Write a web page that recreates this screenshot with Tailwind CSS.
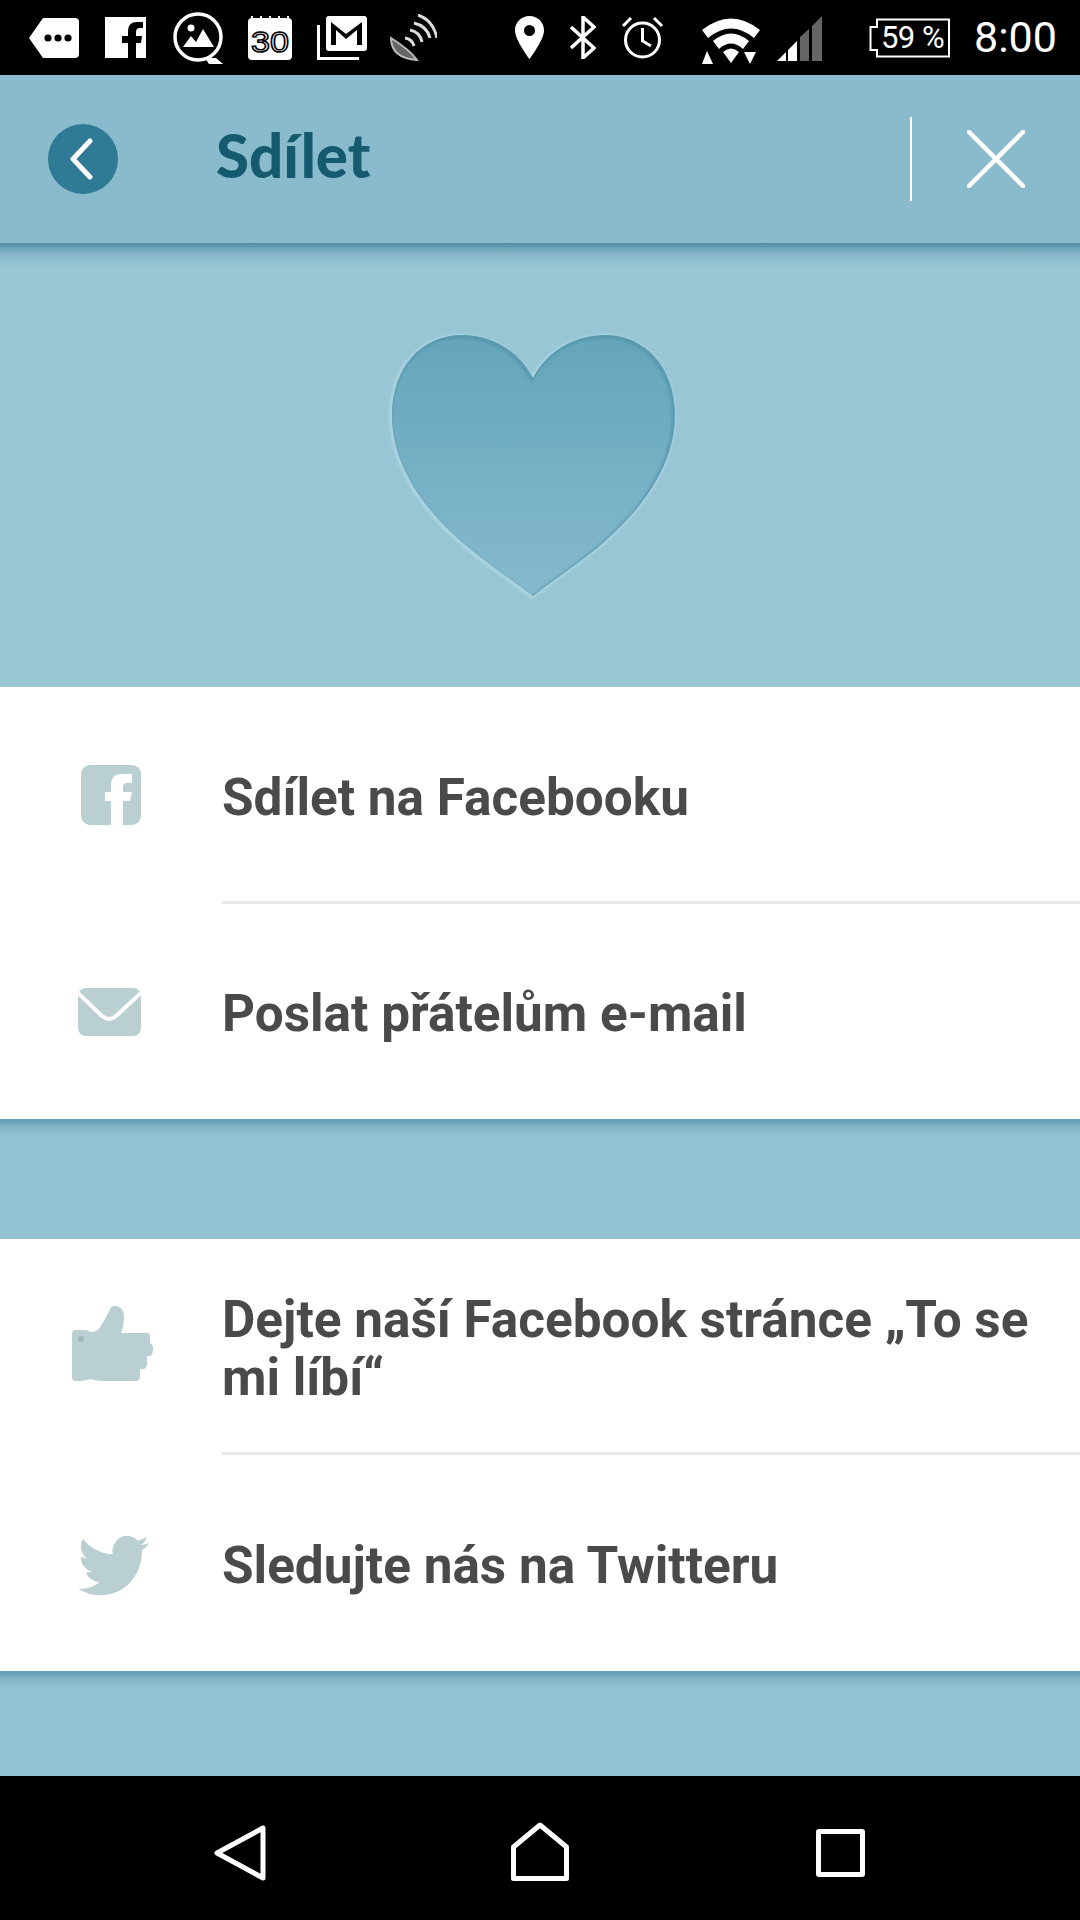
<!DOCTYPE html>
<html lang="cs">
<head>
    <meta charset="UTF-8">
    <meta name="viewport" content="width=device-width, initial-scale=1.0">
    <title>Sdílet</title>
    <script src="https://cdn.jsdelivr.net/npm/@tailwindcss/browser@4"></script>
</head>
<body class="bg-white font-['Roboto',sans-serif]">
<div class="w-[1080px] h-[1920px] flex flex-col overflow-hidden">

    <!-- status bar -->
    <div class="h-[75px] shrink-0 bg-black flex items-center text-white">
        <svg class="ml-[29px] w-[50px] h-[40px]" viewBox="0 0 50 40"><path d="M14 0H46Q50 0 50 4V36Q50 40 46 40H14L0 20Z" fill="#fff"/><circle cx="19" cy="20" r="3.6" fill="#000"/><circle cx="29" cy="20" r="3.6" fill="#000"/><circle cx="39" cy="20" r="3.6" fill="#000"/></svg>
        <svg class="ml-[26px] w-[41px] h-[41px]" viewBox="0 0 41 41"><path d="M0 0H41V41H31V26H36L37 19H31V15Q31 11 35 11H38V5H32Q23 5 23 14V19H17V26H23V41H0Z" fill="#fff"/></svg>
        <svg class="ml-[27px] w-[50px] h-[52px]" viewBox="0 0 50 52"><circle cx="25" cy="25" r="23" fill="none" stroke="#fff" stroke-width="3.5"/><path d="M32 46H43L50 52H36Z" fill="#fff"/><circle cx="18" cy="16" r="3.5" fill="#fff"/><path d="M10 35L18 24L23 30L30 17L41 35Z" fill="#fff"/></svg>
        <svg class="ml-[25px] w-[44px] h-[44px]" viewBox="0 0 44 44"><path d="M4 2H40Q44 2 44 6V40Q44 44 40 44H4Q0 44 0 40V6Q0 2 4 2Z" fill="#fff"/><path d="M4 2V0M13 2V0M22 2V0M31 2V0M40 2V0" stroke="#fff" stroke-width="2"/><text x="22" y="36" text-anchor="middle" fill="#fff" stroke="#000" stroke-width="1.500" font-family="Liberation Sans, sans-serif" font-size="30" textLength="38" lengthAdjust="spacingAndGlyphs">30</text></svg>
        <svg class="ml-[25px] w-[50px] h-[44px]" viewBox="0 0 50 44"><path d="M1.500 9V42.500H42" fill="none" stroke="#fff" stroke-width="3"/><rect x="9" y="0" width="41" height="35" rx="3" fill="#fff"/><path d="M14 29V6L29 18L45 6V29H40V14L29 23L19 14V29Z" fill="#000"/></svg>
        <svg class="ml-[23px] w-[47px] h-[47px]" viewBox="0 0 47 47"><path d="M1 24Q1 44 27 46Q20 36 1 24Z" fill="#666" stroke="#bbb" stroke-width="2"/><path d="M15 24Q22 25 24 32M20 16Q30 18 32 28M24 9Q37 12 40 24M28 1Q43 6 47 24" fill="none" stroke="#ddd" stroke-width="3"/></svg>
        <svg class="ml-[78px] w-[29px] h-[43px]" viewBox="0 0 29 43"><path fill-rule="evenodd" d="M14.500 0C6 0 0 6.500 0 14.500C0 24 14.500 43 14.500 43S29 24 29 14.500C29 6.500 23 0 14.500 0ZM14.500 9A5.500 5.500 0 1 1 14.500 20A5.500 5.500 0 1 1 14.500 9Z" fill="#fff"/></svg>
        <svg class="ml-[26px] w-[26px] h-[43px]" viewBox="0 0 26 43"><path d="M1 11L24 32L13 42V1L24 11L1 32" fill="none" stroke="#fff" stroke-width="3.500"/></svg>
        <svg class="ml-[25px] w-[43px] h-[43px]" viewBox="0 0 43 43"><circle cx="21.500" cy="24" r="17" fill="none" stroke="#fff" stroke-width="3"/><path d="M21.500 12V25L30 30M2 10L10 2M41 10L33 2" fill="none" stroke="#fff" stroke-width="3"/></svg>
        <svg class="ml-[38px] w-[58px] h-[48px] mt-[4px]" viewBox="0 0 58 48"><path d="M0 14Q29 -9 58 14L52 22Q29 3 6 22Z" fill="#fff"/><path d="M11 25Q29 10 47 25L41 33Q29 22 17 33Z" fill="#fff"/><path d="M21 36Q29 29 37 36L29 47Z" fill="#fff"/><path d="M5 35L11 48H0ZM42 36H54L48 48Z" fill="#fff"/></svg>
        <svg class="ml-[17px] w-[46px] h-[46px]" viewBox="0 0 46 46"><path d="M0 46L9 37V46ZM11 35L20 26V46H11Z" fill="#fff"/><path d="M23 22L32 14V46H23ZM35 11L45 1V46H35Z" fill="#666"/></svg>
        <div class="ml-[46px] w-[81px] h-[40px] relative flex items-center justify-center">
            <svg class="absolute inset-0" width="81" height="40" viewBox="0 0 81 40"><path d="M8 1.500H80V38.500H8V32H1.500V9H8Z" fill="none" stroke="#fff" stroke-width="2"/></svg>
            <span class="relative ml-[6px] text-[31px] leading-none tracking-[-0.5px] whitespace-nowrap">59 %</span>
        </div>
        <span class="ml-[24px] text-[43px] leading-none">8:00</span>
    </div>

    <!-- header -->
    <div class="h-[168px] shrink-0 bg-[#8abbcd] flex items-center pl-[48px]">
        <div class="w-[70px] h-[70px] rounded-full bg-[#2f7a94] flex items-center justify-center">
            <svg class="w-[24px] h-[42px] mr-[4px]" viewBox="0 0 24 42"><path d="M21 3L4 21L21 39" fill="none" stroke="#fff" stroke-width="5" stroke-linecap="round" stroke-linejoin="round"/></svg>
        </div>
        <h1 class="ml-[98px] -mt-[8px] text-[60px] leading-none font-black font-['Lato',sans-serif] text-[#155a6e]">Sdílet</h1>
        <div class="ml-auto w-[2px] h-[84px] bg-white"></div>
        <svg class="ml-[55px] mr-[55px] w-[58px] h-[58px]" viewBox="0 0 58 58"><path d="M2 2L56 56M56 2L2 56" fill="none" stroke="#fff" stroke-width="4.500" stroke-linecap="round"/></svg>
    </div>

    <!-- hero -->
    <div class="h-[444px] shrink-0 bg-[#98c6d5] bg-[linear-gradient(180deg,#528ea6_0,#83b3c5_10px,#98c6d5_24px)] pt-[92px] pl-[392px]">
        <svg class="w-[283px] h-[261px] overflow-visible" viewBox="0 0 283 261">
            <defs>
                <linearGradient id="heartFill" x1="0" y1="0" x2="0" y2="1"><stop offset="0" stop-color="#64a5bb"/><stop offset="1" stop-color="#86bacd"/></linearGradient>
                <clipPath id="heartClip"><path d="M141 43C127 16 100 0 70 0C30 0 0 32 0 80C0 120 20 160 60 198C85 222 115 241 141 261C167 241 197 222 222 198C262 160 283 120 283 80C283 32 253 0 213 0C183 0 155 16 141 43Z"/></clipPath>
                <filter id="soft" x="-10%" y="-10%" width="120%" height="120%"><feGaussianBlur stdDeviation="1.500"/></filter>
            </defs>
            <path d="M141 43C127 16 100 0 70 0C30 0 0 32 0 80C0 120 20 160 60 198C85 222 115 241 141 261C167 241 197 222 222 198C262 160 283 120 283 80C283 32 253 0 213 0C183 0 155 16 141 43Z" fill="none" stroke="#bfe1ea" stroke-width="2" transform="translate(-1 1)" filter="url(#soft)"/>
            <path d="M141 43C127 16 100 0 70 0C30 0 0 32 0 80C0 120 20 160 60 198C85 222 115 241 141 261C167 241 197 222 222 198C262 160 283 120 283 80C283 32 253 0 213 0C183 0 155 16 141 43Z" fill="url(#heartFill)"/>
            <g clip-path="url(#heartClip)"><path d="M141 43C127 16 100 0 70 0C30 0 0 32 0 80C0 120 20 160 60 198C85 222 115 241 141 261C167 241 197 222 222 198C262 160 283 120 283 80C283 32 253 0 213 0C183 0 155 16 141 43Z" fill="none" stroke="#4b8ba3" stroke-opacity="0.7" stroke-width="3" filter="url(#soft)" transform="translate(-1.500 1.500)"/></g>
        </svg>
    </div>

    <!-- first list -->
    <div class="bg-white shrink-0">
        <div class="h-[214px] flex items-center">
            <div class="w-[222px] shrink-0 pl-[81px] pt-[1px]">
                <svg class="w-[60px] h-[60px]" viewBox="0 0 60 60"><rect width="60" height="60" rx="9" fill="#b9cfd1"/><path d="M30 60V36H24V27H30V20Q30 9 41 9H51V18H46Q42 18 42 22V27H51L49 36H42V60Z" fill="#fff"/></svg>
            </div>
            <span class="text-[51.3px] font-bold text-[#4a4a4a] leading-[58px] pt-[8px]">Sdílet na Facebooku</span>
        </div>
        <div class="ml-[222px] h-[3px] bg-[#e8e8e8]"></div>
        <div class="h-[215px] flex items-center">
            <div class="w-[222px] shrink-0 pl-[78px]">
                <svg class="w-[63px] h-[48px]" viewBox="0 0 63 48"><defs><clipPath id="mailClip"><rect width="63" height="48" rx="8"/></clipPath></defs><rect width="63" height="48" rx="8" fill="#b9cfd1"/><path d="M-2 3L24 28Q31 34 38 28L65 3" fill="none" stroke="#fff" stroke-width="4" clip-path="url(#mailClip)"/></svg>
            </div>
            <span class="text-[51.3px] font-bold text-[#4a4a4a] leading-[58px] pt-[4px]">Poslat přátelům e-mail</span>
        </div>
    </div>

    <!-- gap -->
    <div class="h-[120px] shrink-0 bg-[#93c3d3] bg-[linear-gradient(180deg,#5c9ab0_0,#83b4c6_8px,#93c3d3_18px)]"></div>

    <!-- second list -->
    <div class="bg-white shrink-0">
        <div class="h-[213px] flex items-center">
            <div class="w-[222px] shrink-0 pl-[72px]">
                <svg class="w-[81px] h-[75px] -mt-[5px]" viewBox="0 0 81 75"><path d="M4 24H13Q16 24 18 26Q26 27 30 18Q36 8 38 3Q39 0 43 0Q52 0 52 12Q52 20 49 27H75Q78 27 78 30V37Q81 38 81 42Q81 49 78 50H75V58Q75 63 71 63H68V70Q68 75 64 75H32Q24 75 18 73Q14 75 4 75Q0 75 0 71V28Q0 24 4 24Z" fill="#b9cfd1"/><circle cx="9" cy="33" r="3" fill="#a0b6b8"/></svg>
            </div>
            <span class="text-[51.3px] font-bold text-[#4a4a4a] leading-[58px] pt-[6px] pr-[40px]">Dejte naší Facebook stránce „To se mi líbí“</span>
        </div>
        <div class="ml-[222px] h-[3px] bg-[#e8e8e8]"></div>
        <div class="h-[216px] flex items-center">
            <div class="w-[222px] shrink-0 pl-[78px] pt-[6px]">
                <svg class="w-[71px] h-[60px]" viewBox="0 2.300 24 19.700" preserveAspectRatio="none"><path d="M23.953 4.570a10 10 0 01-2.825.775 4.958 4.958 0 002.163-2.723c-.951.555-2.005.959-3.127 1.184a4.920 4.920 0 00-8.384 4.482C7.690 8.095 4.067 6.130 1.640 3.162a4.822 4.822 0 00-.666 2.475c0 1.710.870 3.213 2.188 4.096a4.904 4.904 0 01-2.228-.616v.060a4.923 4.923 0 003.946 4.827 4.996 4.996 0 01-2.212.085 4.936 4.936 0 004.604 3.417 9.867 9.867 0 01-6.102 2.105c-.390 0-.779-.023-1.170-.067a13.995 13.995 0 007.557 2.209c9.053 0 13.998-7.496 13.998-13.985 0-.210 0-.420-.015-.630A9.935 9.935 0 0024 4.590z" fill="#b9cfd1"/></svg>
            </div>
            <span class="text-[51.3px] font-bold text-[#4a4a4a] leading-[58px] pt-[6px]">Sledujte nás na Twitteru</span>
        </div>
    </div>

    <!-- bottom gap -->
    <div class="h-[105px] shrink-0 bg-[#93c3d3] bg-[linear-gradient(180deg,#5c9ab0_0,#83b4c6_8px,#93c3d3_18px)]"></div>

    <!-- nav bar -->
    <div class="flex-1 bg-black flex items-center pt-[10px]">
        <svg class="ml-[214px] w-[52px] h-[56px]" viewBox="0 0 52 56"><path d="M3 28L49 3V53Z" fill="none" stroke="#fff" stroke-width="5" stroke-linejoin="round"/></svg>
        <svg class="ml-[245px] w-[58px] h-[59px] -mt-[3px]" viewBox="0 0 58 59"><path d="M2.500 56.500V25L29 3L55.500 25V56.500Z" fill="none" stroke="#fff" stroke-width="5" stroke-linejoin="round"/></svg>
        <div class="ml-[247px] w-[49px] h-[48px] border-[5px] border-white rounded-[3px]"></div>
    </div>
</div>
</body>
</html>
